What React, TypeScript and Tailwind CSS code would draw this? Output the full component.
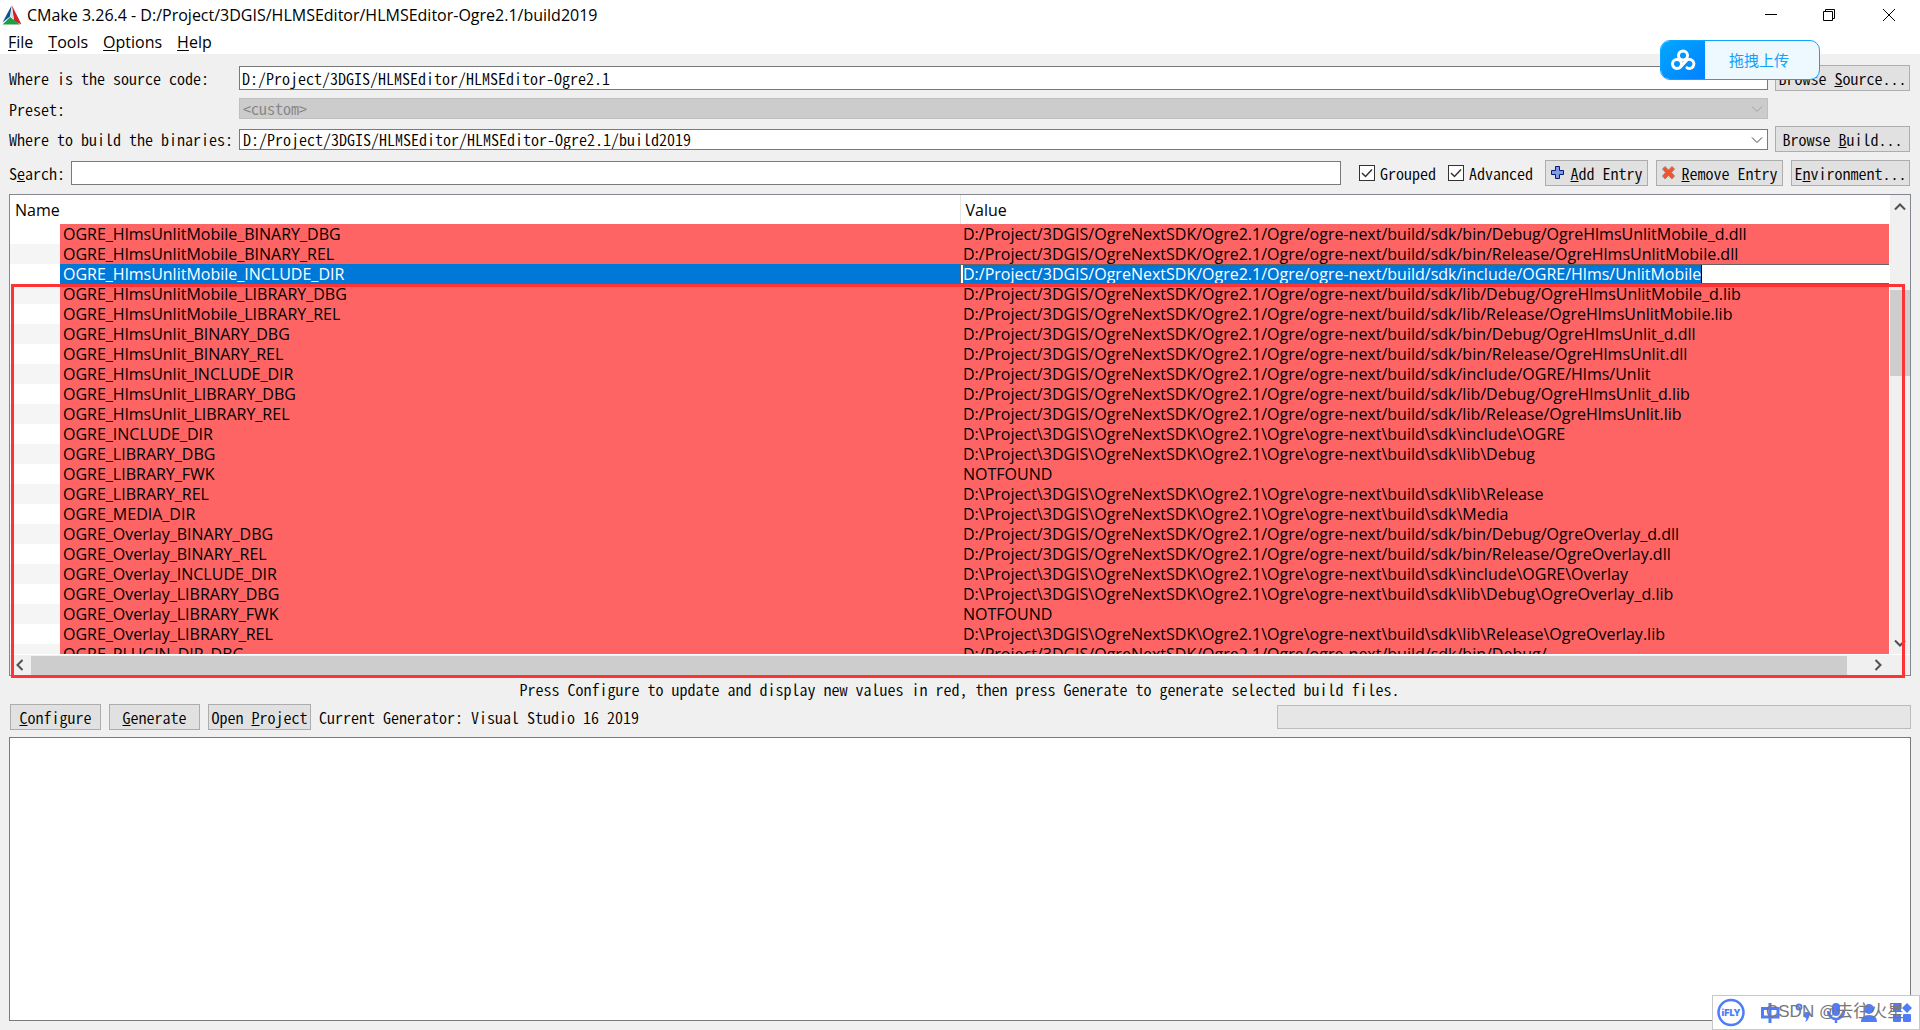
import { useState } from "react";
import type { ReactNode } from "react";

const BIN = "D:/Project/3DGIS/OgreNextSDK/Ogre2.1/Ogre/ogre-next/build/sdk";
const WIN = "D:\\Project\\3DGIS\\OgreNextSDK\\Ogre2.1\\Ogre\\ogre-next\\build\\sdk";

const entries = [
  { name: "OGRE_HlmsUnlitMobile_BINARY_DBG", value: `${BIN}/bin/Debug/OgreHlmsUnlitMobile_d.dll` },
  { name: "OGRE_HlmsUnlitMobile_BINARY_REL", value: `${BIN}/bin/Release/OgreHlmsUnlitMobile.dll` },
  { name: "OGRE_HlmsUnlitMobile_INCLUDE_DIR", value: `${BIN}/include/OGRE/Hlms/UnlitMobile` },
  { name: "OGRE_HlmsUnlitMobile_LIBRARY_DBG", value: `${BIN}/lib/Debug/OgreHlmsUnlitMobile_d.lib` },
  { name: "OGRE_HlmsUnlitMobile_LIBRARY_REL", value: `${BIN}/lib/Release/OgreHlmsUnlitMobile.lib` },
  { name: "OGRE_HlmsUnlit_BINARY_DBG", value: `${BIN}/bin/Debug/OgreHlmsUnlit_d.dll` },
  { name: "OGRE_HlmsUnlit_BINARY_REL", value: `${BIN}/bin/Release/OgreHlmsUnlit.dll` },
  { name: "OGRE_HlmsUnlit_INCLUDE_DIR", value: `${BIN}/include/OGRE/Hlms/Unlit` },
  { name: "OGRE_HlmsUnlit_LIBRARY_DBG", value: `${BIN}/lib/Debug/OgreHlmsUnlit_d.lib` },
  { name: "OGRE_HlmsUnlit_LIBRARY_REL", value: `${BIN}/lib/Release/OgreHlmsUnlit.lib` },
  { name: "OGRE_INCLUDE_DIR", value: `${WIN}\\include\\OGRE` },
  { name: "OGRE_LIBRARY_DBG", value: `${WIN}\\lib\\Debug` },
  { name: "OGRE_LIBRARY_FWK", value: "NOTFOUND" },
  { name: "OGRE_LIBRARY_REL", value: `${WIN}\\lib\\Release` },
  { name: "OGRE_MEDIA_DIR", value: `${WIN}\\Media` },
  { name: "OGRE_Overlay_BINARY_DBG", value: `${BIN}/bin/Debug/OgreOverlay_d.dll` },
  { name: "OGRE_Overlay_BINARY_REL", value: `${BIN}/bin/Release/OgreOverlay.dll` },
  { name: "OGRE_Overlay_INCLUDE_DIR", value: `${WIN}\\include\\OGRE\\Overlay` },
  { name: "OGRE_Overlay_LIBRARY_DBG", value: `${WIN}\\lib\\Debug\\OgreOverlay_d.lib` },
  { name: "OGRE_Overlay_LIBRARY_FWK", value: "NOTFOUND" },
  { name: "OGRE_Overlay_LIBRARY_REL", value: `${WIN}\\lib\\Release\\OgreOverlay.lib` },
  { name: "OGRE_PLUGIN_DIR_DBG", value: `${BIN}/bin/Debug/` },
];

const menus = ["File", "Tools", "Options", "Help"];

function Chevron({ className }: { className: string }) {
  return (
    <svg viewBox="0 0 12 8" className={className} fill="none" stroke="currentColor">
      <path d="M1 1.5 L6 6.5 L11 1.5" />
    </svg>
  );
}

function PushButton({ children, className }: { children: ReactNode; className: string }) {
  return (
    <button
      className={`flex h-[26px] items-center justify-center whitespace-nowrap border border-[#adadad] bg-[#e1e1e1] ${className}`}
    >
      {children}
    </button>
  );
}

function Check({ label }: { label: string }) {
  const [checked, setChecked] = useState(true);

  return (
    <label className="flex items-center gap-[5px]">
      <span className="grid size-4 place-items-center">
        <input
          type="checkbox"
          checked={checked}
          onChange={(e) => setChecked(e.target.checked)}
          className="col-start-1 row-start-1 size-4 appearance-none border border-[#333333] bg-white"
        />
        {checked && (
          <svg
            viewBox="0 0 16 16"
            className="pointer-events-none col-start-1 row-start-1 size-4"
            fill="none"
            stroke="#333333"
            strokeWidth="1.5"
          >
            <path d="M3 8 L6.5 11.5 L13 4.5" />
          </svg>
        )}
      </span>
      {label}
    </label>
  );
}

function TitleBar() {
  return (
    <header className="flex h-[30px] items-center bg-white font-['Open_Sans','Noto_Sans',sans-serif]">
      <svg viewBox="0 0 20 20" className="ml-[2px] mr-[5px] size-5">
        <path d="M9.6 0.5 L0.5 17.5 L8 11.5 Z" fill="#0b5394" />
        <path d="M10 0.5 L19.5 19.5 L12 16 Z" fill="#d3222a" />
        <path d="M8.2 12 L0.5 19.5 H18 Z" fill="#1f9e48" />
        <path d="M9.8 2 L8.3 11.6 L11.8 14.5 Z" fill="#d8dde2" />
      </svg>
      <h1 className="flex-1 text-base">
        CMake 3.26.4 - D:/Project/3DGIS/HLMSEditor/HLMSEditor-Ogre2.1/build2019
      </h1>
      <div className="flex">
        <button aria-label="Minimize" className="flex w-[58px] justify-center">
          <svg viewBox="0 0 14 14" className="size-[14px]" stroke="#000" fill="none">
            <path d="M1 6.5 H13" />
          </svg>
        </button>
        <button aria-label="Restore" className="flex w-[58px] justify-center">
          <svg viewBox="0 0 14 14" className="size-[14px]" stroke="#000" fill="none">
            <path d="M1.5 3.5 H10.5 V12.5 H1.5 Z M3.5 3.5 V1.5 H12.5 V10.5 H10.5" />
          </svg>
        </button>
        <button aria-label="Close" className="flex w-[62px] justify-center">
          <svg viewBox="0 0 14 14" className="size-[14px]" stroke="#000" fill="none">
            <path d="M1 1 L13 13 M13 1 L1 13" />
          </svg>
        </button>
      </div>
    </header>
  );
}

function MenuBar() {
  return (
    <nav className="flex h-6 items-center gap-[15px] bg-white px-2 font-['Open_Sans','Noto_Sans',sans-serif] text-base">
      {menus.map((menu) => (
        <button key={menu} className="leading-6">
          <span className="underline underline-offset-2">{menu[0]}</span>
          {menu.slice(1)}
        </button>
      ))}
    </nav>
  );
}

function Locations() {
  return (
    <div className="grid grid-cols-[223px_1fr_135px] items-center gap-x-[7px]">
      <label htmlFor="source">Where is the source code:</label>
      <input
        id="source"
        defaultValue="D:/Project/3DGIS/HLMSEditor/HLMSEditor-Ogre2.1"
        className="h-6 w-full border border-[#7a7a7a] bg-white px-[2px]"
      />
      <PushButton className="w-full">
        <span>
          Browse <u>S</u>ource...
        </span>
      </PushButton>

      <label htmlFor="preset">Preset:</label>
      <div className="relative my-[7px]">
        <select
          id="preset"
          disabled
          className="block h-[21px] w-full appearance-none border border-[#bfbfbf] bg-[#cccccc] px-[3px] leading-[19px] text-[#838383] opacity-100"
        >
          <option>&lt;custom&gt;</option>
        </select>
        <Chevron className="pointer-events-none absolute right-[5px] top-[7px] h-2 w-3 text-[#a0a0a0]" />
      </div>
      <span />

      <label htmlFor="binaries" className="whitespace-nowrap">
        Where to build the binaries:
      </label>
      <div className="relative">
        <select
          id="binaries"
          className="block h-[21px] w-full appearance-none border border-[#7a7a7a] bg-white px-[3px] leading-[19px]"
        >
          <option>D:/Project/3DGIS/HLMSEditor/HLMSEditor-Ogre2.1/build2019</option>
        </select>
        <Chevron className="pointer-events-none absolute right-[5px] top-[7px] h-2 w-3 text-[#404040]" />
      </div>
      <PushButton className="w-full">
        <span>
          Browse <u>B</u>uild...
        </span>
      </PushButton>
    </div>
  );
}

function SearchRow() {
  return (
    <div className="mt-2 flex items-center">
      <label htmlFor="search" className="w-[62px]">
        S<u>e</u>arch:
      </label>
      <input id="search" className="h-6 flex-1 border border-[#7a7a7a] bg-white px-[2px]" />
      <div className="ml-[18px] flex gap-3">
        <Check label="Grouped" />
        <Check label="Advanced" />
      </div>
      <PushButton className="ml-3 w-[103px] gap-1">
        <svg viewBox="0 0 16 16" className="size-4">
          <path
            d="M5.5 1.5 H9.5 V5.5 H13.5 V9.5 H9.5 V13.5 H5.5 V9.5 H1.5 V5.5 H5.5 Z"
            fill="#7d9be8"
            stroke="#0a1a6b"
          />
        </svg>
        <span>
          <u>A</u>dd Entry
        </span>
      </PushButton>
      <PushButton className="ml-2 w-[127px] gap-1">
        <svg viewBox="0 0 16 16" className="size-4">
          <path
            d="M4 1.5 L7.5 5 L11 1.5 L13.5 4 L10.5 7.5 L13.5 11 L11 14 L7.5 10.5 L4 14 L1.5 11 L4.5 7.5 L1.5 4 Z"
            fill="#f0532d"
            stroke="#a88478"
          />
        </svg>
        <span>
          <u>R</u>emove Entry
        </span>
      </PushButton>
      <PushButton className="ml-2 w-[119px]">
        <span>
          E<u>n</u>vironment...
        </span>
      </PushButton>
    </div>
  );
}

function CacheTable() {
  return (
    <section className="relative -mr-px mt-2 border border-[#828790] bg-white font-['Open_Sans','Noto_Sans',sans-serif] text-base font-normal [font-feature-settings:normal]">
      <div className="flex">
        <div className="h-[459px] flex-1 overflow-hidden">
          <table className="w-full table-fixed border-collapse">
            <thead>
              <tr className="h-[29px] text-left">
                <th className="w-[950px] border-r border-[#e5e5e5] px-[5px] py-0 font-normal leading-5">Name</th>
                <th className="px-[5px] py-0 font-normal leading-5">Value</th>
              </tr>
            </thead>
            <tbody>
              {entries.map((entry, index) => {
                const selected = index === 2;
                return (
                  <tr key={entry.name} className="h-5 odd:bg-white even:bg-[#f5f5f5]">
                    <td className="py-0 pl-[50px] pr-0">
                      <div
                        className={`h-5 overflow-hidden whitespace-nowrap pl-[3px] leading-5 ${
                          selected ? "bg-[#0078d7] text-white" : "bg-[#ff6464]"
                        }`}
                      >
                        {entry.name}
                      </div>
                    </td>
                    <td className="p-0">
                      {selected ? (
                        <div className="flex h-5 border-y border-l border-[#646464] bg-white pl-[2px]">
                          <input
                            aria-label={entry.name}
                            defaultValue={entry.value}
                            className="h-[18px] border-r border-black bg-[#0078d7] p-0 leading-[18px] text-white outline-none [field-sizing:content]"
                          />
                        </div>
                      ) : (
                        <div className="h-5 overflow-hidden whitespace-nowrap bg-[#ff6464] pl-[3px] leading-5">
                          {entry.value}
                        </div>
                      )}
                    </td>
                  </tr>
                );
              })}
            </tbody>
          </table>
        </div>

        {/* Vertical scroll bar */}
        <div className="ml-px flex w-5 flex-col items-center bg-[#f0f0f0]">
          <Chevron className="mt-2 h-2 w-3 rotate-180 stroke-2 text-[#505050]" />
          <div className="mt-[79px] h-[86px] w-full bg-[#cdcdcd]" />
          <Chevron className="mb-[7px] mt-auto h-2 w-3 stroke-2 text-[#505050]" />
        </div>
      </div>

      {/* Horizontal scroll bar */}
      <div className="mt-px flex h-5 items-center bg-[#f0f0f0]">
        <Chevron className="ml-1 mr-[5px] h-2 w-3 rotate-90 stroke-2 text-[#505050]" />
        <div className="h-[19px] flex-1 bg-[#cdcdcd]" />
        <Chevron className="ml-[25px] mr-[26px] h-2 w-3 -rotate-90 stroke-2 text-[#505050]" />
      </div>

      {/* Marked region drawn over the list */}
      <div className="pointer-events-none absolute -bottom-[3px] left-px right-[5px] top-[89px] border-[3px] border-[#ff3333]" />
    </section>
  );
}

function UploadBadge() {
  return (
    <button className="absolute right-[100px] top-10 flex h-10 w-40 overflow-hidden rounded-[10px] border border-[#0ea5ff] bg-[#edf8ff] text-[#12a0f8]">
      <span className="flex h-full w-11 items-center justify-center bg-gradient-to-br from-[#06a7ff] to-[#0580ff]">
        <svg viewBox="0 0 28 28" className="size-7" fill="none" stroke="#fff" strokeWidth="3" strokeLinecap="round">
          <circle cx="14" cy="9.5" r="4.5" />
          <circle cx="8" cy="18" r="4.5" />
          <path d="M11.2 21.2 L17 15 A4.5 4.5 0 1 1 18 21.8" />
        </svg>
      </span>
      <span className="flex h-full flex-1 items-center justify-center pr-[6px] font-['Noto_Sans_CJK_SC',sans-serif] text-[15px] leading-5">
        拖拽上传
      </span>
    </button>
  );
}

function InputMethodBar() {
  return (
    <div className="absolute bottom-0 right-0 h-[35px] w-52 border border-[#c8c8c8] bg-white">
      <svg viewBox="0 0 206 33" className="h-[33px] w-[206px]" fill="#4f7df9">
        <circle cx="18" cy="16.5" r="12.5" fill="none" stroke="#4f7df9" strokeWidth="2.5" />
        <text
          x="18"
          y="20"
          textAnchor="middle"
          fontFamily="Inter, sans-serif"
          fontSize="9"
          fontWeight="900"
        >
          iFLY
        </text>
        <path d="M49.5 12.5 H65 V21 H49.5 Z M57 7 V27" fill="none" stroke="#4f7df9" strokeWidth="3" />
        <circle cx="86" cy="11" r="2.5" fill="none" stroke="#4f7df9" strokeWidth="2" />
        <path d="M91 18 a3 3 0 1 1 5 3 q-1 4 -4 5 q2 -3 1 -4 a3 3 0 0 1 -2 -4 Z" />
        <rect x="119" y="7" width="8" height="13" rx="4" />
        <path d="M115 15 a8 8 0 0 0 16 0 M123 23 V27" fill="none" stroke="#4f7df9" strokeWidth="2.5" />
        <circle cx="156" cy="13" r="5" />
        <path d="M148 26 q0 -7 8 -7 q8 0 8 7 Z" />
        <rect x="180" y="8" width="8" height="8" rx="1" />
        <path d="M194 7 L199 12 L194 17 L189 12 Z" />
        <rect x="180" y="18" width="8" height="8" rx="1" />
        <rect x="190" y="18" width="8" height="8" rx="1" />
      </svg>
      <span className="absolute left-[53px] top-[4px] whitespace-nowrap font-['Liberation_Sans','Noto_Sans_CJK_SC',sans-serif] text-[17px] leading-6 text-[#77777a]">
        CSDN @去往火星
      </span>
    </div>
  );
}

export default function App() {
  return (
    <div className="relative flex min-h-screen flex-col bg-[#f0f0f0] text-black">
      <TitleBar />
      <MenuBar />
      <main className="flex flex-1 flex-col pb-[9px] pl-[9px] pr-[10px] pt-[11px] font-['Noto_Sans_CJK_SC',sans-serif] text-base font-[350] leading-5 [font-feature-settings:'hwid','liga'_0,'kern'_0]">
        <Locations />
        <SearchRow />
        <CacheTable />

        <p className="mt-[3px] text-center">
          Press Configure to update and display new values in red, then press Generate to generate selected build
          files.
        </p>

        <div className="-mr-px mt-[5px] flex items-center gap-2 pl-px">
          <PushButton className="w-[91px]">
            <span>
              <u>C</u>onfigure
            </span>
          </PushButton>
          <PushButton className="w-[91px]">
            <span>
              <u>G</u>enerate
            </span>
          </PushButton>
          <PushButton className="w-[103px]">
            <span>
              Open <u>P</u>roject
            </span>
          </PushButton>
          <span className="flex-1">Current Generator: Visual Studio 16 2019</span>
          <div role="progressbar" aria-label="Progress" className="h-6 w-1/3 border border-[#bcbcbc] bg-[#e6e6e6]" />
        </div>

        <textarea
          aria-label="Output"
          readOnly
          className="-mr-px mt-[7px] flex-1 resize-none border border-[#7a7a7a] bg-white"
        />
      </main>

      <UploadBadge />
      <InputMethodBar />
    </div>
  );
}
